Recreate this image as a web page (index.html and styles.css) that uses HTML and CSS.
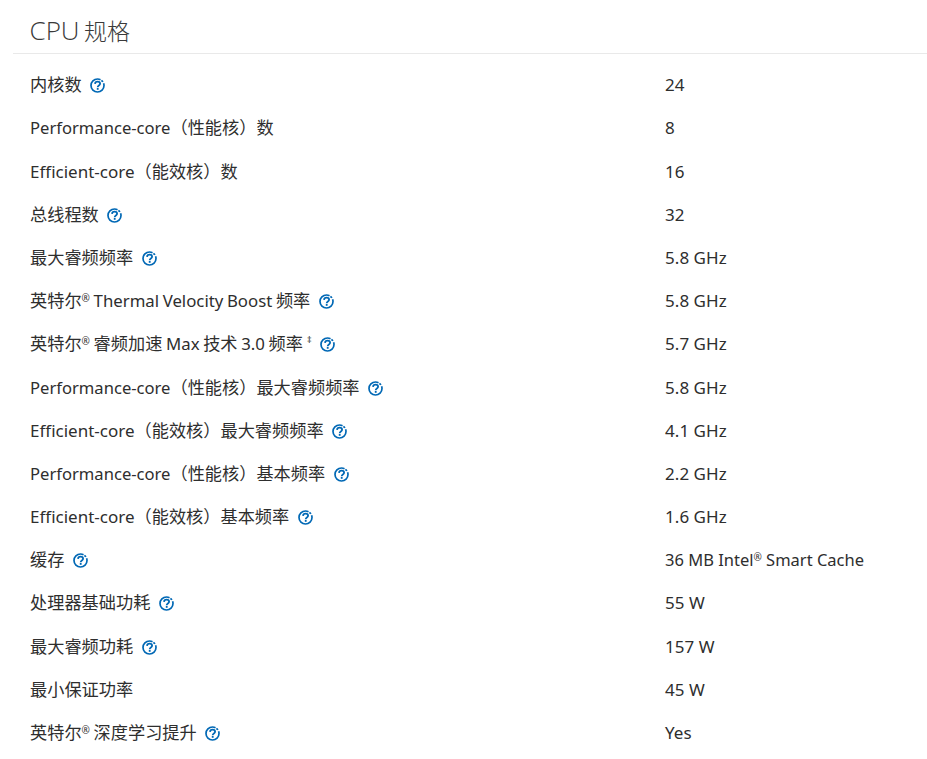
FILE: index.html
```html
<!DOCTYPE html>
<html lang="zh-CN">
<head>
<meta charset="utf-8">
<title>CPU 规格</title>
<link rel="stylesheet" href="styles.css">
</head>
<body>
<svg class="defs" width="0" height="0" aria-hidden="true">
  <symbol id="help" viewBox="0 0 15 15">
    <circle cx="7.500" cy="7.500" r="6.500" fill="none" stroke="#0068b5" stroke-width="1.700" stroke-dasharray="33 1 2 1.500"/>
    <path d="M5 5.900c.1-1.500 1.100-2.300 2.600-2.300 1.500 0 2.500.9 2.500 2.100 0 1.900-2.400 1.800-2.400 3.500" fill="none" stroke="#0068b5" stroke-width="1.800"/>
    <rect x="6.800" y="10" width="1.800" height="1.800" fill="#0068b5"/>
  </symbol>
</svg>
<section class="specs">
  <h2 class="title"><span class="title-lat">CPU</span> 规格</h2>
  <dl class="list">
    <div class="row"><dt class="label">内核数<svg class="help"><use href="#help"/></svg></dt><dd class="value">24</dd></div>
    <div class="row"><dt class="label"><span class="perf">Performance-core</span>（性能核）数</dt><dd class="value">8</dd></div>
    <div class="row"><dt class="label"><span class="eff">Efficient-core</span>（能效核）数</dt><dd class="value">16</dd></div>
    <div class="row"><dt class="label">总线程数<svg class="help"><use href="#help"/></svg></dt><dd class="value">32</dd></div>
    <div class="row"><dt class="label">最大睿频频率<svg class="help"><use href="#help"/></svg></dt><dd class="value">5.8 GHz</dd></div>
    <div class="row"><dt class="label label-tight">英特尔<sup class="mark">®</sup> <span class="lat">Thermal Velocity Boost</span> 频率<svg class="help"><use href="#help"/></svg></dt><dd class="value">5.8 GHz</dd></div>
    <div class="row"><dt class="label label-tight">英特尔<sup class="mark">®</sup> 睿频加速 <span class="lat">Max</span> 技术 <span class="lat">3.0</span> 频率<sup class="note">‡</sup><svg class="help"><use href="#help"/></svg></dt><dd class="value">5.7 GHz</dd></div>
    <div class="row"><dt class="label"><span class="perf">Performance-core</span>（性能核）最大睿频频率<svg class="help"><use href="#help"/></svg></dt><dd class="value">5.8 GHz</dd></div>
    <div class="row"><dt class="label"><span class="eff">Efficient-core</span>（能效核）最大睿频频率<svg class="help"><use href="#help"/></svg></dt><dd class="value">4.1 GHz</dd></div>
    <div class="row"><dt class="label"><span class="perf">Performance-core</span>（性能核）基本频率<svg class="help"><use href="#help"/></svg></dt><dd class="value">2.2 GHz</dd></div>
    <div class="row"><dt class="label"><span class="eff">Efficient-core</span>（能效核）基本频率<svg class="help"><use href="#help"/></svg></dt><dd class="value">1.6 GHz</dd></div>
    <div class="row"><dt class="label">缓存<svg class="help"><use href="#help"/></svg></dt><dd class="value value-long">36 MB Intel<sup class="mark">®</sup> Smart Cache</dd></div>
    <div class="row"><dt class="label">处理器基础功耗<svg class="help"><use href="#help"/></svg></dt><dd class="value">55 W</dd></div>
    <div class="row"><dt class="label">最大睿频功耗<svg class="help"><use href="#help"/></svg></dt><dd class="value">157 W</dd></div>
    <div class="row"><dt class="label">最小保证功率</dt><dd class="value">45 W</dd></div>
    <div class="row"><dt class="label label-tight">英特尔<sup class="mark">®</sup> 深度学习提升<svg class="help"><use href="#help"/></svg></dt><dd class="value">Yes</dd></div>
  </dl>
</section>
</body>
</html>
```
FILE: styles.css
```css
html, body {
  margin: 0;
  padding: 0;
  background: #fff;
}
body {
  font-family: "Noto Sans", "Noto Sans CJK SC", sans-serif;
  font-variant-ligatures: none;
  color: #2e2e2e;
  overflow: hidden;
}
.defs {
  position: absolute;
}
.specs {
  padding: 0 0 0 13px;
}
.title {
  margin: 0;
  height: 54px;
  box-sizing: border-box;
  padding: 12px 0 0 16.500px;
  border-bottom: 1px solid #e9e9e9;
  font-size: 23px;
  line-height: 36px;
  font-weight: 300;
  word-spacing: -1.500px;
  color: #3a3a3a;
}
.title-lat {
  font-family: "Open Sans", "Noto Sans", sans-serif;
  font-size: 26px;
  font-weight: 300;
}
.list {
  margin: 0;
  padding: 9.600px 0 0 17px;
}
.row {
  display: grid;
  grid-template-columns: 635px 1fr;
  height: 43.200px;
  align-items: center;
}
.label, .value {
  margin: 0;
  line-height: 24px;
  white-space: nowrap;
}
.label {
  font-size: 17.200px;
}
.label-tight {
  word-spacing: -0.800px;
}
.value {
  font-size: 17px;
  letter-spacing: 0.050px;
}
.value-long {
  font-size: 16.500px;
  letter-spacing: 0;
}
.lat {
  font-size: 16.800px;
}
.perf {
  font-size: 16.600px;
}
.eff {
  font-size: 17px;
}
.mark {
  font-size: 10px;
  line-height: 1;
  vertical-align: 5px;
}
.note {
  font-size: 9px;
  line-height: 1;
  vertical-align: 7px;
  margin-left: 4px;
}
.help {
  width: 15px;
  height: 15px;
  margin-left: 8.500px;
  vertical-align: -2px;
}
```
